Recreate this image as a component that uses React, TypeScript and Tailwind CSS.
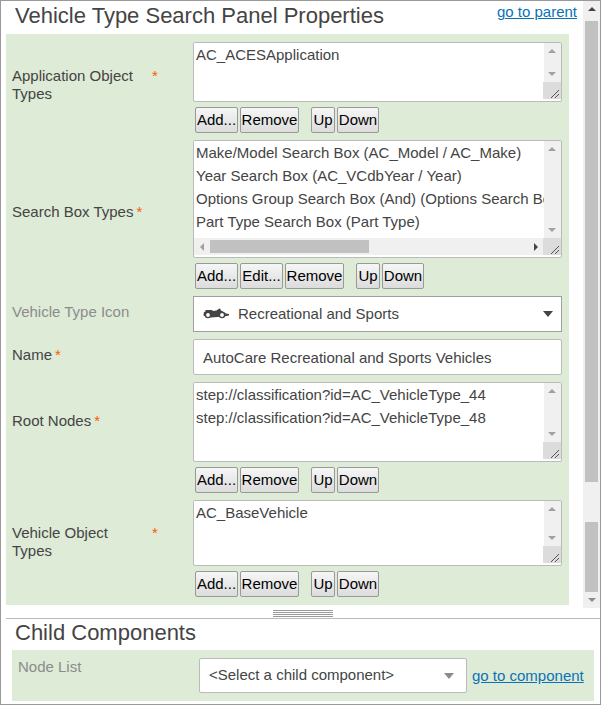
import type { ReactNode } from "react";

type Direction = "up" | "down" | "left" | "right";

const arrowPoints: Record<Direction, string> = {
  up: "4,10 8,6 12,10",
  down: "4,6 8,10 12,6",
  left: "10,4 6,8 10,12",
  right: "6,4 10,8 6,12",
};

function Arrow({ dir, className }: { dir: Direction; className: string }) {
  return (
    <svg viewBox="0 0 16 16" className={`size-4 shrink-0 ${className}`} aria-hidden="true">
      <polygon points={arrowPoints[dir]} fill="currentColor" />
    </svg>
  );
}

function Caret({ className }: { className: string }) {
  return (
    <svg
      viewBox="0 0 12 6"
      className={`pointer-events-none absolute inset-y-0 my-auto h-1.5 w-3 ${className}`}
      aria-hidden="true"
    >
      <polygon points="1,0 11,0 6,6" fill="currentColor" />
    </svg>
  );
}

function CarIcon() {
  return (
    <svg
      viewBox="0 0 26 12"
      className="pointer-events-none absolute inset-y-0 left-2.5 my-auto h-3 w-[26px] text-[#444]"
      aria-hidden="true"
    >
      <path
        d="M0.5 7 L1 4 L2.5 3.5 L2.5 2 L9 2 L10 3 L13.5 2.5 L15.5 1 L17 0.5 L18 2.5 L20 3.5 L23 5.5 L26 6 L26 7.5 L21 8.5 L8 9.5 L1 8 Z"
        fill="currentColor"
      />
      <circle cx="5" cy="7" r="2.6" fill="#fff" stroke="currentColor" strokeWidth="1.4" />
      <circle cx="19" cy="7" r="2.6" fill="#fff" stroke="currentColor" strokeWidth="1.4" />
    </svg>
  );
}

function Resizer() {
  return (
    <svg viewBox="0 0 18 17" className="-ml-px h-[17px] w-[18px] shrink-0 bg-[#dcdcdc]" aria-hidden="true">
      <path d="M8 16 L16 8 M12 16 L16 12" stroke="#555" strokeWidth="1" fill="none" />
    </svg>
  );
}

function ListBox({
  id,
  items,
  height,
  horizontal = false,
}: {
  id: string;
  items: string[];
  height: string;
  horizontal?: boolean;
}) {
  return (
    <div className={`flex rounded-xs border border-[#bbb] bg-white pb-0.5 ${height}`}>
      <div className="flex min-w-0 flex-1 flex-col">
        <select
          id={id}
          multiple
          className="min-h-0 w-full flex-1 appearance-none overflow-hidden bg-white p-0 outline-none"
        >
          {items.map((item) => (
            <option key={item} className="h-[23px] min-h-0 p-0 pl-0.5 pt-[3px]">
              {item}
            </option>
          ))}
        </select>
        {horizontal && (
          <div className="flex h-[17px] shrink-0 items-center bg-[#f0f0f0]">
            <Arrow dir="left" className="text-[#a0a0a0]" />
            <div className="flex-1">
              <div className="h-[13px] w-1/2 bg-[#c1c1c1]" />
            </div>
            <Arrow dir="right" className="text-[#444]" />
          </div>
        )}
      </div>
      <div className="flex w-[17px] shrink-0 flex-col bg-[#f0f0f0] text-[#a0a0a0]">
        <Arrow dir="up" className="" />
        <div className="flex-1" />
        <Arrow dir="down" className="" />
        <Resizer />
      </div>
    </div>
  );
}

const buttonWidths = {
  "Add...": "w-[43px]",
  "Edit...": "w-[43px]",
  Remove: "w-[59px]",
  Up: "w-6 ml-2.5",
  Down: "w-[42px]",
};

function Buttons({ names }: { names: (keyof typeof buttonWidths)[] }) {
  return (
    <div className="mt-[5px] flex gap-0.5 pl-0.5">
      {names.map((name) => (
        <button
          key={name}
          type="button"
          className={`flex h-[26px] justify-center rounded-xs border border-[#999] bg-linear-to-b from-[#f6f6f6] to-[#dcdcdc] leading-6 text-black ${buttonWidths[name]}`}
        >
          {name}
        </button>
      ))}
    </div>
  );
}

function Field({
  id,
  label,
  required = false,
  labelClass = "pb-1",
  children,
}: {
  id: string;
  label: string;
  required?: boolean;
  labelClass?: string;
  children: ReactNode;
}) {
  return (
    <div className="flex items-center">
      <label htmlFor={id} className={`flex w-[181px] shrink-0 gap-[3px] leading-[18px] ${labelClass}`}>
        <span className={`max-w-[137px] ${required ? "" : "text-[#8c8c8c]"}`}>{label}</span>
        {required && <span className="text-[#ff5a00]">*</span>}
      </label>
      <div className="min-w-0 flex-1">{children}</div>
    </div>
  );
}

export default function App() {
  return (
    <div className="flex flex-col border border-[#999] bg-white font-['Liberation_Sans',Arial,sans-serif] text-[15px] text-[#444]">
      <section className="flex">
        <div className="min-w-0 flex-1 pb-[3px] pl-[5px]">
          <header className="flex h-[33px] justify-between pl-[9px] pr-1.5">
            <h1 className="text-[22px] leading-[30px]">Vehicle Type Search Panel Properties</h1>
            <a href="#parent" className="leading-[22px] text-[#0b72b5] underline">
              go to parent
            </a>
          </header>
          <form className="mr-3.5 flex flex-col gap-[7px] bg-[#deebd7] py-2 pl-1.5 pr-[7px]">
            <Field id="application" label="Application Object Types" required labelClass="pb-1.5">
              <ListBox id="application" height="h-[60px]" items={["AC_ACESApplication"]} />
              <Buttons names={["Add...", "Remove", "Up", "Down"]} />
            </Field>
            <Field id="search" label="Search Box Types" required labelClass="pb-1.5">
              <ListBox
                id="search"
                height="h-[118px]"
                horizontal
                items={[
                  "Make/Model Search Box (AC_Model / AC_Make)",
                  "Year Search Box (AC_VCdbYear / Year)",
                  "Options Group Search Box (And) (Options Search Box)",
                  "Part Type Search Box (Part Type)",
                ]}
              />
              <Buttons names={["Add...", "Edit...", "Remove", "Up", "Down"]} />
            </Field>
            <Field id="icon" label="Vehicle Type Icon">
              <div className="relative">
                <select
                  id="icon"
                  className="block h-9 w-full appearance-none border border-[#a0a0a0] bg-white pl-11 pr-8"
                >
                  <option>Recreational and Sports</option>
                </select>
                <CarIcon />
                <Caret className="right-2 text-[#444]" />
              </div>
            </Field>
            <Field id="name" label="Name" required>
              <input
                id="name"
                type="text"
                defaultValue="AutoCare Recreational and Sports Vehicles"
                className="block h-9 w-full rounded-xs border border-[#bbb] bg-white px-[9px]"
              />
            </Field>
            <Field id="roots" label="Root Nodes" required labelClass="pb-[34px]">
              <ListBox
                id="roots"
                height="h-20"
                items={[
                  "step://classification?id=AC_VehicleType_44",
                  "step://classification?id=AC_VehicleType_48",
                ]}
              />
              <Buttons names={["Add...", "Remove", "Up", "Down"]} />
            </Field>
            <Field id="vehicle" label="Vehicle Object Types" required labelClass="pb-3.5">
              <ListBox id="vehicle" height="h-[66px]" items={["AC_BaseVehicle"]} />
              <Buttons names={["Add...", "Remove", "Up", "Down"]} />
            </Field>
          </form>
        </div>
        <div className="flex w-[17px] shrink-0 flex-col items-center bg-[#f0f0f0]">
          <Arrow dir="up" className="text-[#444]" />
          <div className="flex w-full flex-1 flex-col px-0.5 pt-1">
            <div className="flex-1 bg-[#c1c1c1]" />
            <div className="h-10" />
            <div className="h-[70px] bg-[#c1c1c1]" />
          </div>
          <Arrow dir="down" className="text-[#8c8c8c]" />
        </div>
      </section>

      <div className="ml-[5px] border-b border-[#bbb] pt-0.5">
        <div className="mx-auto mb-px flex w-[60px] flex-col gap-px">
          <div className="h-px bg-[#999]" />
          <div className="h-px bg-[#999]" />
          <div className="h-px bg-[#999]" />
          <div className="h-px bg-[#999]" />
        </div>
      </div>

      <section className="pb-[3px] pl-[11px] pr-1.5">
        <h2 className="pb-[3px] pl-[3px] text-[22px] leading-7">Child Components</h2>
        <div className="flex bg-[#deebd7] px-1.5 py-2">
          <label htmlFor="node" className="w-[181px] shrink-0 leading-[18px] text-[#8c8c8c]">
            Node List
          </label>
          <div className="relative min-w-0 flex-1">
            <select
              id="node"
              className="block h-[35px] w-full appearance-none rounded-xs border border-[#bbb] bg-white pl-[9px] pr-8"
            >
              <option>&lt;Select a child component&gt;</option>
            </select>
            <Caret className="right-3 text-[#8c8c8c]" />
          </div>
          <a href="#component" className="w-[121px] shrink-0 pl-[5px] leading-[35px] text-[#0b72b5] underline">
            go to component
          </a>
        </div>
      </section>
    </div>
  );
}
